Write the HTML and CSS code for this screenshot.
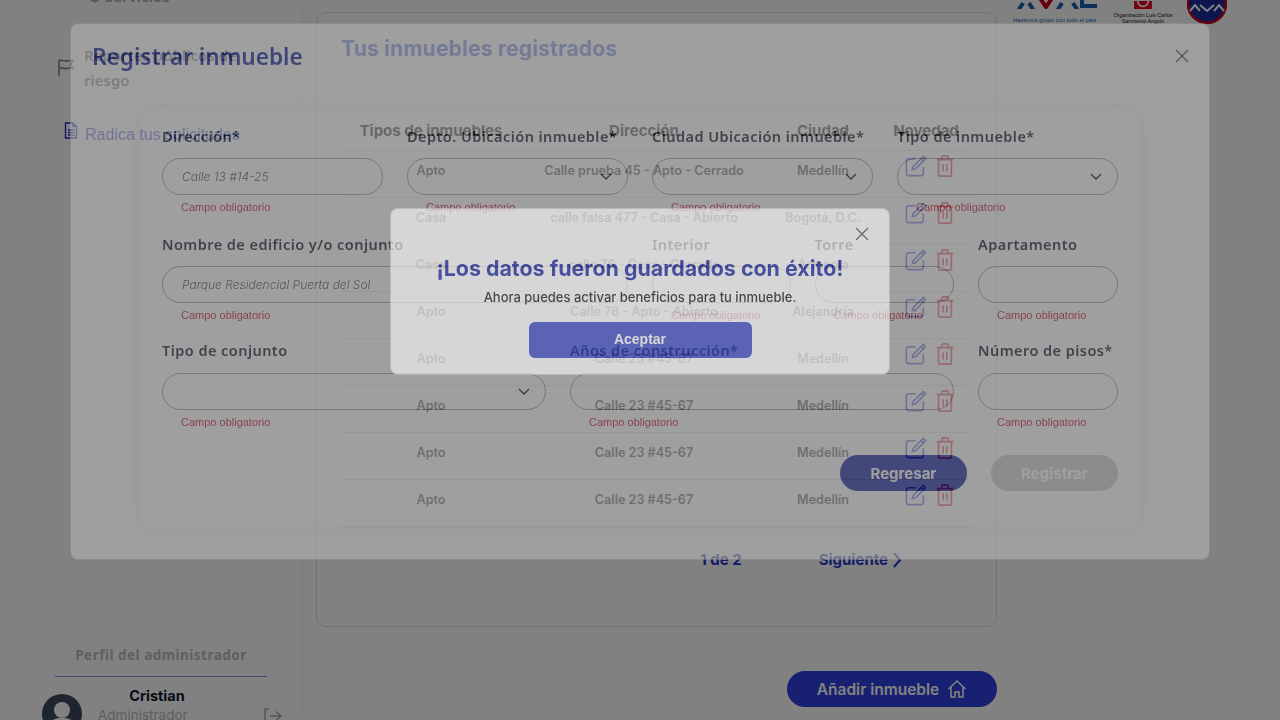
FILE: index.html
```html
<!DOCTYPE html>
<html lang="es">
<head>
    <meta charset="UTF-8">
    <title>Registrar inmueble</title>
    <link rel="stylesheet" href="styles.css">
</head>
<body>
<div class="page">
    <aside class="sidebar">
        <nav class="side-nav">
            <div class="nav-item nav-services"><span>⚙ Servicios</span></div>
            <div class="nav-item nav-risk">
                <svg class="nav-icon flag" viewBox="0 0 18 18"><path d="M2 17.500V1.500c3-1 5 1 8 .5s4-1 6-.5l-2.500 3.500L16 9c-2-.5-3 0-6 .5s-5-1-8-.5"/></svg>
                <span>Reportes públicos de riesgo</span>
            </div>
            <div class="nav-item nav-requests">
                <svg class="nav-icon doc" viewBox="0 0 14 17"><path d="M1.500 1h7.500l3.500 3.500v11.500h-11zM9 1v3.500h3.500M4 8h6.500M4 10.500h6.500M4 13h6.500"/></svg>
                <span>Radica tus solicitudes</span>
            </div>
        </nav>
        <div class="profile">
            <h4 class="profile-title">Perfil del administrador</h4>
            <div class="profile-row">
                <svg class="avatar" viewBox="0 0 40 40"><circle cx="20" cy="20" r="20" fill="#3c4a5c"/><circle cx="20" cy="16" r="8" fill="#fff"/><path d="M7 33c1-8 7-9 13-9s12 1 13 9c-3 4-8 7-13 7s-10-3-13-7z" fill="#fff"/></svg>
                <div class="profile-text">
                    <div class="profile-name">Cristian</div>
                    <div class="profile-role">Administrador</div>
                </div>
                <svg class="logout" viewBox="0 0 20 16"><path d="M6 1H2v14h4M7 8h11M13 3.500L18 8l-5 4.500"/></svg>
            </div>
        </div>
    </aside>

    <main class="main">
        <div class="main-col">
            <section class="card">
                <h2 class="card-title">Tus inmuebles registrados</h2>
                <table class="table">
                    <thead>
                    <tr><th class="c-type">Tipos de inmuebles</th><th class="c-addr">Dirección</th><th class="c-city">Ciudad</th><th class="c-act">Novedad</th></tr>
                    </thead>
                    <tbody>
                    <tr><td>Apto</td><td>Calle prueba 45 - Apto - Cerrado</td><td>Medellín</td><td><span class="acts"><svg class="edit" viewBox="0 0 24 24"><use href="#i-edit"/></svg><svg class="trash" viewBox="0 0 20 24"><use href="#i-trash"/></svg></span></td></tr>
                    <tr><td>Casa</td><td>calle falsa 477 - Casa - Abierto</td><td>Bogotá, D.C.</td><td><span class="acts"><svg class="edit" viewBox="0 0 24 24"><use href="#i-edit"/></svg><svg class="trash" viewBox="0 0 20 24"><use href="#i-trash"/></svg></span></td></tr>
                    <tr><td>Casa</td><td>calle 76 - Casa - Cerrado</td><td>Armenia</td><td><span class="acts"><svg class="edit" viewBox="0 0 24 24"><use href="#i-edit"/></svg><svg class="trash" viewBox="0 0 20 24"><use href="#i-trash"/></svg></span></td></tr>
                    <tr><td>Apto</td><td>Calle 78 - Apto - Abierto</td><td>Alejandría</td><td><span class="acts"><svg class="edit" viewBox="0 0 24 24"><use href="#i-edit"/></svg><svg class="trash" viewBox="0 0 20 24"><use href="#i-trash"/></svg></span></td></tr>
                    <tr><td>Apto</td><td>Calle 23 #45-67</td><td>Medellín</td><td><span class="acts"><svg class="edit" viewBox="0 0 24 24"><use href="#i-edit"/></svg><svg class="trash" viewBox="0 0 20 24"><use href="#i-trash"/></svg></span></td></tr>
                    <tr><td>Apto</td><td>Calle 23 #45-67</td><td>Medellín</td><td><span class="acts"><svg class="edit" viewBox="0 0 24 24"><use href="#i-edit"/></svg><svg class="trash" viewBox="0 0 20 24"><use href="#i-trash"/></svg></span></td></tr>
                    <tr><td>Apto</td><td>Calle 23 #45-67</td><td>Medellín</td><td><span class="acts"><svg class="edit" viewBox="0 0 24 24"><use href="#i-edit"/></svg><svg class="trash" viewBox="0 0 20 24"><use href="#i-trash"/></svg></span></td></tr>
                    <tr><td>Apto</td><td>Calle 23 #45-67</td><td>Medellín</td><td><span class="acts"><svg class="edit" viewBox="0 0 24 24"><use href="#i-edit"/></svg><svg class="trash" viewBox="0 0 20 24"><use href="#i-trash"/></svg></span></td></tr>
                    </tbody>
                </table>
                <div class="pager">
                    <span>1 de 2</span>
                    <span class="pager-next">Siguiente <svg viewBox="0 0 10 16"><path d="M2 1l6 7-6 7"/></svg></span>
                </div>
            </section>
            <div class="add-row">
                <button class="add-btn">Añadir inmueble
                    <svg viewBox="0 0 20 20"><path d="M1.500 10L10 2l8.500 8M4 8v10h4v-5h4v5h4V8"/></svg>
                </button>
            </div>
        </div>

        <div class="logos">
            <div class="logo-aval">
                <svg viewBox="0 0 84 9"><path class="lb" d="M5 11l5-8M16 3l5 8M44 11l5-8M60 3l5 8M69 -2v8h15"/><path class="lr" d="M27 -2l6 9 6-9"/></svg>
                <div class="logo-slogan">Hacemos grupo con todo el país</div>
            </div>
            <div class="logo-org">
                <svg viewBox="0 0 20 9"><rect width="20" height="9" fill="#e2001a"/><circle cx="10" cy="0" r="6" fill="none" stroke="#fff" stroke-width="2"/></svg>
                <div class="logo-org-text">Organización Luis Carlos<br>Sarmiento Angulo</div>
            </div>
            <svg class="logo-badge" viewBox="0 0 40 40"><circle cx="20" cy="20" r="19" fill="#1c2a9c" stroke="#d0021b" stroke-width="2.500"/><path d="M3 27l5-6 5 6M13 21l7 6 7-6M27 27l5-6 5 6" fill="none" stroke="#fff" stroke-width="2"/></svg>
        </div>
    </main>
</div>

<div class="backdrop backdrop-one"></div>

<div class="modal modal-form">
    <div class="modal-head">
        <h2 class="modal-title">Registrar inmueble</h2>
        <svg class="close" viewBox="0 0 14 14"><path d="M1 1l12 12M13 1L1 13"/></svg>
    </div>
    <form class="form-card">
        <div class="form-row row-a">
            <div class="field"><label>Dirección*</label><div class="input"><span class="hint">Calle 13 #14-25</span></div><div class="err">Campo obligatorio</div></div>
            <div class="field"><label>Depto. Ubicación inmueble*</label><div class="input select"><svg viewBox="0 0 12 8"><path d="M1 1l5 5 5-5"/></svg></div><div class="err">Campo obligatorio</div></div>
            <div class="field"><label>Ciudad Ubicación inmueble*</label><div class="input select"><svg viewBox="0 0 12 8"><path d="M1 1l5 5 5-5"/></svg></div><div class="err">Campo obligatorio</div></div>
            <div class="field"><label>Tipo de inmueble*</label><div class="input select"><svg viewBox="0 0 12 8"><path d="M1 1l5 5 5-5"/></svg></div><div class="err">Campo obligatorio</div></div>
        </div>
        <div class="form-row row-b">
            <div class="field"><label>Nombre de edificio y/o conjunto</label><div class="input"><span class="hint">Parque Residencial Puerta del Sol</span></div><div class="err">Campo obligatorio</div></div>
            <div class="field"><label>Interior</label><div class="input"></div><div class="err">Campo obligatorio</div></div>
            <div class="field"><label>Torre</label><div class="input"></div><div class="err">Campo obligatorio</div></div>
            <div class="field"><label>Apartamento</label><div class="input"></div><div class="err">Campo obligatorio</div></div>
        </div>
        <div class="form-row row-c">
            <div class="field"><label>Tipo de conjunto</label><div class="input select"><svg viewBox="0 0 12 8"><path d="M1 1l5 5 5-5"/></svg></div><div class="err">Campo obligatorio</div></div>
            <div class="field"><label>Años de construcción*</label><div class="input"></div><div class="err">Campo obligatorio</div></div>
            <div class="field"><label>Número de pisos*</label><div class="input"></div><div class="err">Campo obligatorio</div></div>
        </div>
        <div class="form-btns">
            <button type="button" class="pill pill-back">Regresar</button>
            <button type="button" class="pill pill-off">Registrar</button>
        </div>
    </form>
</div>

<div class="backdrop backdrop-two"></div>

<div class="modal modal-ok">
    <svg class="close" viewBox="0 0 14 14"><path d="M1 1l12 12M13 1L1 13"/></svg>
    <h3 class="ok-title">¡Los datos fueron guardados con éxito!</h3>
    <p class="ok-text">Ahora puedes activar beneficios para tu inmueble.</p>
    <button class="ok-btn">Aceptar</button>
</div>

<svg class="defs" width="0" height="0">
    <symbol id="i-edit" viewBox="0 0 24 24">
        <path d="M11.500 4H4a2.500 2.500 0 0 0-2.500 2.500V20A2.500 2.500 0 0 0 4 22.500h13.500A2.500 2.500 0 0 0 20 20v-7.500"/>
        <path d="M20 1.500l2.500 2.500-11 11-3.500 1 1-3.500zM17.500 4l2.500 2.500"/>
    </symbol>
    <symbol id="i-trash" viewBox="0 0 20 24">
        <path d="M1 5h18M6.500 5V2.500A1.500 1.500 0 0 1 8 1h4a1.500 1.500 0 0 1 1.500 1.500V5M3 5v16.500A1.500 1.500 0 0 0 4.500 23h11a1.500 1.500 0 0 0 1.500-1.500V5M8 10v8M12 10v8"/>
    </symbol>
</svg>
</body>
</html>
```

FILE: styles.css
```css
* {
    box-sizing: border-box;
}

html,
body {
    margin: 0;
    height: 720px;
    overflow: hidden;
}

body {
    background: #fff;
    font-family: "Inter", "Liberation Sans", sans-serif;
    color: #2b2b2b;
}

.defs {
    position: absolute;
}

/* pagina de fondo */
.page {
    display: flex;
    height: 720px;
    overflow: hidden;
}

.sidebar {
    margin-left: 20px;
    margin-right: 14px;
    flex: none;
    width: 282px;
    background: #fff;
    box-shadow: 2px 0 10px rgba(0, 0, 0, .04);
    display: flex;
    flex-direction: column;
    justify-content: space-between;
}

.side-nav {
    display: flex;
    flex-direction: column;
}

.nav-item {
    display: flex;
    font-family: "Noto Sans", sans-serif;
    font-size: 15px;
    font-weight: 600;
    color: #6f6f6f;
}

.nav-services {
    margin-top: -14px;
    padding-left: 68px;
    height: 20px;
    color: #a8a8a8;
}

.nav-risk {
    margin-top: 37px;
    padding-left: 37px;
    line-height: 25px;
    width: 240px;
    gap: 9px;
    align-items: center;
}

.nav-icon {
    flex: none;
    fill: none;
    stroke-width: 1.400;
}

.flag {
    width: 18px;
    height: 18px;
    stroke: #777;
}

.nav-requests {
    margin-top: 32px;
    padding-left: 44px;
    gap: 7px;
    align-items: flex-start;
    font-family: "Liberation Sans", sans-serif;
    font-size: 16px;
    font-weight: 400;
    color: #3848d8;
    line-height: 20px;
}

.doc {
    width: 14px;
    height: 17px;
    stroke: #2030c0;
    margin-top: -3px;
}

.profile {
    height: 76px;
}

.profile-title {
    margin: 0 35px;
    padding-bottom: 10px;
    border-bottom: 1px solid #8a8ad8;
    text-align: center;
    font-family: "Noto Sans", sans-serif;
    font-size: 13.500px;
    font-weight: 700;
    letter-spacing: .5px;
    line-height: 22px;
    color: #bcbcc4;
}

.profile-row {
    display: flex;
    padding-left: 22px;
    padding-top: 9px;
    height: 60px;
}

.avatar {
    width: 40px;
    height: 40px;
    margin-top: 8px;
    flex: none;
}

.profile-text {
    margin-left: 16px;
    width: 118px;
}

.profile-name {
    text-align: center;
    font-size: 14.500px;
    font-weight: 700;
    color: #101830;
    line-height: 20px;
}

.profile-role {
    font-size: 13.500px;
    color: #bbb;
    line-height: 18px;
}

.logout {
    width: 20px;
    height: 16px;
    margin-left: 47px;
    margin-top: 22px;
    fill: none;
    stroke: #aaa;
    stroke-width: 1.500;
}

.main {
    flex: 1;
    display: flex;
}

.main-col {
    width: 681px;
    flex: none;
    padding-top: 12px;
}

.card {
    height: 615px;
    border: 1px solid #e0e0e0;
    border-radius: 10px;
    padding: 24px 24px 0;
}

.card-title {
    margin: 0;
    font-size: 21px;
    line-height: 24px;
    font-weight: 700;
    letter-spacing: .2px;
    color: #4a5ed8;
}

.table {
    width: 632px;
    margin-top: 49px;
    border-collapse: collapse;
    table-layout: fixed;
    text-align: center;
    background: #fff;
    box-shadow: 0 0 12px rgba(0, 0, 0, .03);
}

.table th {
    height: 40px;
    vertical-align: bottom;
    font-size: 15px;
    font-weight: 700;
    color: #111;
    white-space: nowrap;
    padding: 0 0 10px;
    border-bottom: 1px solid #ddd;
}

.table td {
    height: 47px;
    padding: 0 0 7px;
    font-size: 12.600px;
    font-weight: 600;
    color: #2b2b2b;
    border-bottom: 1px solid #ddd;
}

.c-type {
    width: 180px;
}

.c-addr {
    width: 246px;
}

.c-city {
    width: 112px;
}

.c-act {
    width: 94px;
}

.acts {
    display: flex;
    gap: 8px;
    justify-content: center;
    padding-left: 8px;
    margin-top: -8px;
}

.edit {
    width: 22px;
    height: 22px;
    fill: none;
    stroke: #2b3fd0;
    stroke-width: 1.700;
}

.trash {
    width: 20px;
    height: 22px;
    fill: none;
    stroke: #d81e2c;
    stroke-width: 1.800;
}

.pager {
    display: flex;
    justify-content: flex-end;
    gap: 77px;
    padding-right: 70px;
    margin-top: 23px;
    font-size: 15px;
    line-height: 20px;
    font-weight: 700;
    color: #2436c8;
}

.pager-next {
    display: flex;
    align-items: center;
    gap: 4px;
}

.pager-next svg {
    width: 10px;
    height: 16px;
    fill: none;
    stroke: currentColor;
    stroke-width: 2;
}

.add-row {
    display: flex;
    justify-content: flex-end;
    margin-top: 44px;
}

.add-btn {
    width: 210px;
    height: 36px;
    border: 0;
    border-radius: 18px;
    background: #3040e0;
    color: #fff;
    display: flex;
    align-items: center;
    justify-content: center;
    gap: 8px;
    font-family: inherit;
    font-size: 15.500px;
    font-weight: 600;
}

.add-btn svg {
    width: 20px;
    height: 20px;
    fill: none;
    stroke: #fff;
    stroke-width: 1.600;
}

/* logos cortados por el scroll */
.logos {
    display: flex;
    margin-left: 16px;
    gap: 16px;
    height: 24px;
    align-items: flex-end;
}

.logo-aval {
    width: 84px;
}

.logo-aval svg {
    display: block;
    width: 84px;
    height: 9px;
    fill: none;
    stroke-width: 4;
}

.lb {
    stroke: #1a5fb4;
}

.lr {
    stroke: #d0021b;
}

.logo-slogan {
    margin-top: 7px;
    white-space: nowrap;
    font-family: "Liberation Sans", sans-serif;
    font-size: 5.800px;
    line-height: 8px;
    color: #1a5fb4;
}

.logo-org {
    width: 60px;
    text-align: center;
}

.logo-org svg {
    display: block;
    width: 20px;
    height: 8px;
    margin: 0 auto;
}

.logo-org-text {
    margin-top: 4px;
    font-family: "Liberation Sans", sans-serif;
    font-size: 5.300px;
    line-height: 5.500px;
    white-space: nowrap;
    color: #111;
}

.logo-badge {
    width: 40px;
    height: 40px;
    margin-left: -2px;
    flex: none;
}

/* capas del modal */
.backdrop {
    position: fixed;
    left: 0;
    top: 0;
    width: 1280px;
    height: 720px;
}

.backdrop-one {
    background: rgba(0, 0, 0, .31);
}

.backdrop-two {
    background: rgba(0, 0, 0, .27);
}

.modal {
    position: fixed;
    background: #fff;
    border: 1px solid rgba(0, 0, 0, .2);
    border-radius: 8px;
}

.close {
    width: 14px;
    height: 14px;
    fill: none;
    stroke: #444;
    stroke-width: 1.300;
}

.modal-form {
    left: 70px;
    top: 23px;
    width: 1140px;
    height: 537px;
    opacity: .54;
    padding: 0 70px;
}

.modal-head {
    margin: 0 -49px;
    height: 86px;
    display: flex;
    justify-content: space-between;
    align-items: center;
    padding-bottom: 22px;
}

.modal-head .close {
    margin-right: -1px;
}

.modal-title {
    margin: 0;
    font-family: "Noto Sans", sans-serif;
    font-size: 22.600px;
    font-weight: 600;
    color: #0a1a9a;
}

.form-card {
    height: 417px;
    border-radius: 10px;
    box-shadow: 0 0 22px rgba(0, 0, 0, .09);
    padding: 16px 21px 0;
}

.form-row {
    display: grid;
    gap: 24px;
}

.row-a {
    grid-template-columns: repeat(4, 221px);
}

.row-b {
    grid-template-columns: 466px 138.500px 139.500px 140px;
}

.row-b .field {
    height: 107px;
}

.row-c {
    grid-template-columns: 384px 384px 140px;
}

.field {
    height: 108px;
}

.field label {
    display: block;
    height: 32px;
    font-family: "Noto Sans", sans-serif;
    font-size: 14.500px;
    font-weight: 600;
    letter-spacing: .45px;
    line-height: 20px;
    color: #0a1428;
    white-space: nowrap;
}

.row-c .field label {
    margin-top: -1px;
    height: 33px;
}

.input {
    height: 37px;
    border: 1px solid #999;
    border-radius: 18.500px;
    display: flex;
    align-items: center;
    padding: 0 19px;
}

.select {
    justify-content: flex-end;
    padding-right: 15px;
}

.select svg {
    width: 12px;
    height: 8px;
    fill: none;
    stroke: #000;
    stroke-width: 1.300;
}

.hint {
    font-size: 12px;
    font-style: italic;
    font-weight: 300;
    color: #444;
    white-space: nowrap;
}

.err {
    margin-top: 5px;
    padding-left: 19px;
    font-family: "Liberation Sans", sans-serif;
    font-size: 11px;
    line-height: 14px;
    color: #c8102e;
}

.form-btns {
    display: flex;
    justify-content: flex-end;
    gap: 24px;
    margin-top: 6px;
}

.pill {
    width: 127px;
    height: 36px;
    border: 0;
    border-radius: 18px;
    font-family: "Inter", sans-serif;
    font-size: 15px;
    font-weight: 700;
    color: #fff;
}

.pill-back {
    background: #1424a0;
}

.pill-off {
    background: #cdcdcd;
}

.modal-ok {
    left: 390px;
    top: 208px;
    width: 500px;
    height: 167px;
    opacity: .57;
    display: flex;
    flex-direction: column;
    align-items: center;
    padding-top: 46px;
}

.modal-ok .close {
    position: absolute;
    right: 20px;
    top: 18px;
}

.ok-title {
    margin: 0;
    font-size: 21.400px;
    line-height: 26px;
    font-weight: 700;
    color: #05149f;
    white-space: nowrap;
}

.ok-text {
    margin: 7px 0 0;
    font-size: 13px;
    line-height: 18px;
    font-weight: 500;
    color: #000;
}

.ok-btn {
    width: 223px;
    height: 36px;
    margin-top: 16px;
    padding-bottom: 3px;
    border: 0;
    border-radius: 6px;
    background: #2535c3;
    color: #fff;
    font-family: "Liberation Sans", sans-serif;
    font-size: 14px;
    font-weight: 700;
}
```
